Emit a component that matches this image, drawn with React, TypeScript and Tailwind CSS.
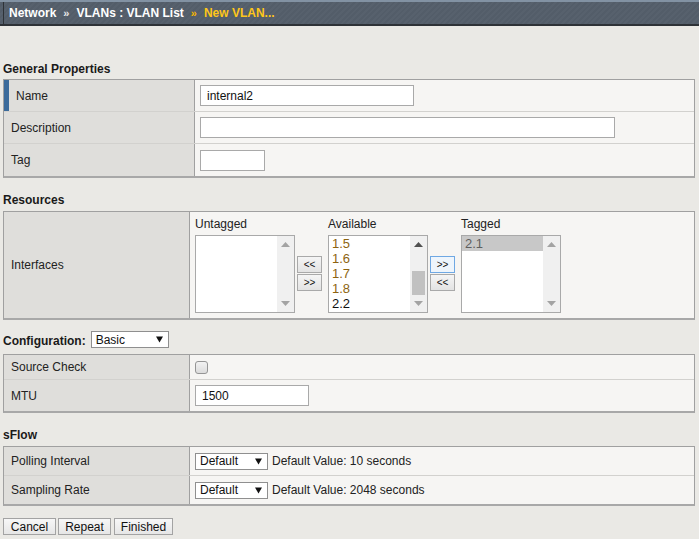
import React from "react";

const Tri = ({ dir, color }: { dir: "up" | "down"; color: string }) => (
  <svg width="9" height="5" viewBox="0 0 9 5">
    {dir === "up" ? (
      <polygon points="0,5 9,5 4.5,0" fill={color} />
    ) : (
      <polygon points="0,0 9,0 4.5,5" fill={color} />
    )}
  </svg>
);

const SelArrow = () => (
  <svg width="7" height="7" viewBox="0 0 7 7">
    <polygon points="0,0.5 7,0.5 3.5,6.5" fill="#111" />
  </svg>
);

function ListBox({
  items,
  thumb,
  upDark,
  selected,
}: {
  items: { t: string; c?: string }[];
  thumb?: boolean;
  upDark?: boolean;
  selected?: string;
}) {
  return (
    <div className="w-[100px] h-[78px] border border-[#a9a9a9] bg-white flex overflow-hidden">
      <div className="flex-1 overflow-hidden">
        {items.map((it) => (
          <div
            key={it.t}
            className={
              "h-[15px] leading-[15px] text-[13px] pl-[3px] " +
              (selected === it.t ? "bg-[#c8c8c8] text-[#5f5f5f]" : "")
            }
            style={selected === it.t ? undefined : { color: it.c || "#111" }}
          >
            {it.t}
          </div>
        ))}
      </div>
      <div className="w-[17px] bg-[#f0f0f0] relative flex flex-col items-center">
        <div className="mt-[6px]">
          <Tri dir="up" color={upDark ? "#505050" : "#a3a3a3"} />
        </div>
        {thumb && (
          <div className="absolute left-[2px] top-[35px] w-[13px] h-[24px] bg-[#c1c1c1]" />
        )}
        <div className="mt-auto mb-[6px]">
          <Tri dir="down" color="#a3a3a3" />
        </div>
      </div>
    </div>
  );
}

function SmallBtn({ label, focused }: { label: string; focused?: boolean }) {
  return (
    <div
      className={
        "w-[25px] h-[17px] flex items-center justify-center text-[10px] leading-none text-[#111] " +
        (focused
          ? "border border-[#6fa8e3] bg-[#eef5fc]"
          : "border border-[#a9a9a9] bg-[linear-gradient(#f5f5f5,#e3e3e3)]")
      }
    >
      {label}
    </div>
  );
}

function Select({ value, w }: { value: string; w: string }) {
  return (
    <div
      className={
        "h-[17px] border border-[#8f8f8f] bg-white flex items-center pl-[4px] pr-[5px] text-[12px] text-[#111] " +
        w
      }
    >
      <span className="flex-1 leading-none">{value}</span>
      <SelArrow />
    </div>
  );
}

function Btn({ label, w }: { label: string; w: string }) {
  return (
    <div
      className={
        "h-[17px] border border-[#a3a3a3] bg-[linear-gradient(#f7f7f7,#e6e6e6)] flex items-center justify-center text-[12px] text-[#111] " +
        w
      }
    >
      {label}
    </div>
  );
}

export default function App() {
  const avail = [
    { t: "1.5", c: "#8d6410" },
    { t: "1.6", c: "#8d6410" },
    { t: "1.7", c: "#8d6410" },
    { t: "1.8", c: "#8d6410" },
    { t: "2.2", c: "#111" },
  ];
  return (
    <div className="w-[699px] h-[539px] overflow-hidden bg-[#eae9e5] text-[12px] text-[#222] font-['Liberation_Sans',Arial,sans-serif]">
      {/* Header */}
      <div className="h-[26px] border-t-2 border-t-[#8292a3] border-b-2 border-b-[#2e3237] bg-[repeating-linear-gradient(135deg,#57616d_0px,#57616d_2px,#535d69_2px,#535d69_4px)] pl-[3px]">
        <div className="h-full border-l border-l-[#2e3237] flex items-center pl-[5px] font-bold text-[12px]">
          <span className="text-white">Network</span>
          <span className="text-[#e8e8e8] text-[11px] px-[7px]">»</span>
          <span className="text-white">VLANs : VLAN List</span>
          <span className="text-[#f7b500] text-[11px] px-[7px]">»</span>
          <span className="text-[#ffc719]">New VLAN...</span>
        </div>
      </div>

      {/* General Properties */}
      <div className="mt-[36px] ml-[3px] h-[14px] leading-[14px] font-bold text-[#1a1a1a]">
        General Properties
      </div>
      <div className="mt-[3px] ml-[3px] w-[692px] border border-[#a0a0a0] border-b-2 border-b-[#a8a8a8]">
        <div className="flex h-[31px]">
          <div className="w-[191px] bg-[#dfdedb] border-r border-r-[#a0a0a0] flex items-center">
            <div className="w-[5px] h-full bg-[#3c6b9b]" />
            <span className="pl-[7px]">Name</span>
          </div>
          <div className="flex-1 bg-[#f6f5f3] flex items-center pl-[5px]">
            <div className="w-[214px] h-[21px] border border-[#a9a9a9] bg-white flex items-center pl-[6px] text-[12px] text-[#111]">
              internal2
            </div>
          </div>
        </div>
        <div className="flex h-[32px] border-t border-t-[#d2d1ce]">
          <div className="w-[191px] bg-[#dfdedb] border-r border-r-[#a0a0a0] flex items-center pl-[7px]">
            Description
          </div>
          <div className="flex-1 bg-[#f6f5f3] flex items-center pl-[5px]">
            <div className="w-[415px] h-[21px] border border-[#a9a9a9] bg-white" />
          </div>
        </div>
        <div className="flex h-[33px] border-t border-t-[#d2d1ce]">
          <div className="w-[191px] bg-[#dfdedb] border-r border-r-[#a0a0a0] flex items-center pl-[7px]">
            Tag
          </div>
          <div className="flex-1 bg-[#f6f5f3] flex items-center pl-[5px]">
            <div className="w-[65px] h-[21px] border border-[#a9a9a9] bg-white" />
          </div>
        </div>
      </div>

      {/* Resources */}
      <div className="mt-[15px] ml-[3px] h-[14px] leading-[14px] font-bold text-[#1a1a1a]">
        Resources
      </div>
      <div className="mt-[4px] ml-[3px] w-[692px] border border-[#a0a0a0] border-b-2 border-b-[#a8a8a8]">
        <div className="flex h-[106px]">
          <div className="w-[186px] bg-[#dfdedb] border-r border-r-[#a0a0a0] flex items-center pl-[7px]">
            Interfaces
          </div>
          <div className="flex-1 bg-[#f6f5f3] flex items-start pl-[5px] pt-[5px]">
            <div className="flex flex-col">
              <div className="h-[14px] leading-[14px]">Untagged</div>
              <div className="mt-[4px]">
                <ListBox items={[]} />
              </div>
            </div>
            <div className="ml-[2px] mt-[39px] flex flex-col gap-[1px]">
              <SmallBtn label="<<" />
              <SmallBtn label=">>" />
            </div>
            <div className="ml-[6px] flex flex-col">
              <div className="h-[14px] leading-[14px]">Available</div>
              <div className="mt-[4px]">
                <ListBox items={avail} thumb upDark />
              </div>
            </div>
            <div className="ml-[2px] mt-[39px] flex flex-col gap-[1px]">
              <SmallBtn label=">>" focused />
              <SmallBtn label="<<" />
            </div>
            <div className="ml-[6px] flex flex-col">
              <div className="h-[14px] leading-[14px]">Tagged</div>
              <div className="mt-[4px]">
                <ListBox items={[{ t: "2.1" }]} selected="2.1" />
              </div>
            </div>
          </div>
        </div>
      </div>

      {/* Configuration */}
      <div className="mt-[11px] ml-[3px] h-[17px] flex items-end">
        <span className="font-bold text-[#1a1a1a] leading-[14px]">Configuration:</span>
        <div className="ml-[5px]">
          <Select value="Basic" w="w-[78px]" />
        </div>
      </div>
      <div className="mt-[6px] ml-[3px] w-[692px] border border-[#a0a0a0] border-b-2 border-b-[#a8a8a8]">
        <div className="flex h-[24px]">
          <div className="w-[186px] bg-[#dfdedb] border-r border-r-[#a0a0a0] flex items-center pl-[7px]">
            Source Check
          </div>
          <div className="flex-1 bg-[#f6f5f3] flex items-center pl-[5px]">
            <div className="w-[13px] h-[13px] rounded-[3px] border border-[#959595] bg-[linear-gradient(#f2f2f2,#dcdcdc)]" />
          </div>
        </div>
        <div className="flex h-[32px] border-t border-t-[#d2d1ce]">
          <div className="w-[186px] bg-[#dfdedb] border-r border-r-[#a0a0a0] flex items-center pl-[7px]">
            MTU
          </div>
          <div className="flex-1 bg-[#f6f5f3] flex items-center pl-[5px]">
            <div className="w-[114px] h-[21px] border border-[#a9a9a9] bg-white flex items-center pl-[6px] text-[12px] text-[#111]">
              1500
            </div>
          </div>
        </div>
      </div>

      {/* sFlow */}
      <div className="mt-[15px] ml-[3px] h-[14px] leading-[14px] font-bold text-[#1a1a1a]">
        sFlow
      </div>
      <div className="mt-[4px] ml-[3px] w-[692px] border border-[#a0a0a0] border-b-2 border-b-[#a8a8a8]">
        <div className="flex h-[28px]">
          <div className="w-[186px] bg-[#dfdedb] border-r border-r-[#a0a0a0] flex items-center pl-[7px]">
            Polling Interval
          </div>
          <div className="flex-1 bg-[#f6f5f3] flex items-center pl-[5px]">
            <Select value="Default" w="w-[73px]" />
            <span className="ml-[4px] text-[#222]">Default Value: 10 seconds</span>
          </div>
        </div>
        <div className="flex h-[29px] border-t border-t-[#d2d1ce]">
          <div className="w-[186px] bg-[#dfdedb] border-r border-r-[#a0a0a0] flex items-center pl-[7px]">
            Sampling Rate
          </div>
          <div className="flex-1 bg-[#f6f5f3] flex items-center pl-[5px]">
            <Select value="Default" w="w-[73px]" />
            <span className="ml-[4px] text-[#222]">Default Value: 2048 seconds</span>
          </div>
        </div>
      </div>

      {/* Buttons */}
      <div className="mt-[12px] ml-[3px] flex">
        <Btn label="Cancel" w="w-[53px]" />
        <div className="ml-[2px]">
          <Btn label="Repeat" w="w-[53px]" />
        </div>
        <div className="ml-[3px]">
          <Btn label="Finished" w="w-[59px]" />
        </div>
      </div>
    </div>
  );
}
